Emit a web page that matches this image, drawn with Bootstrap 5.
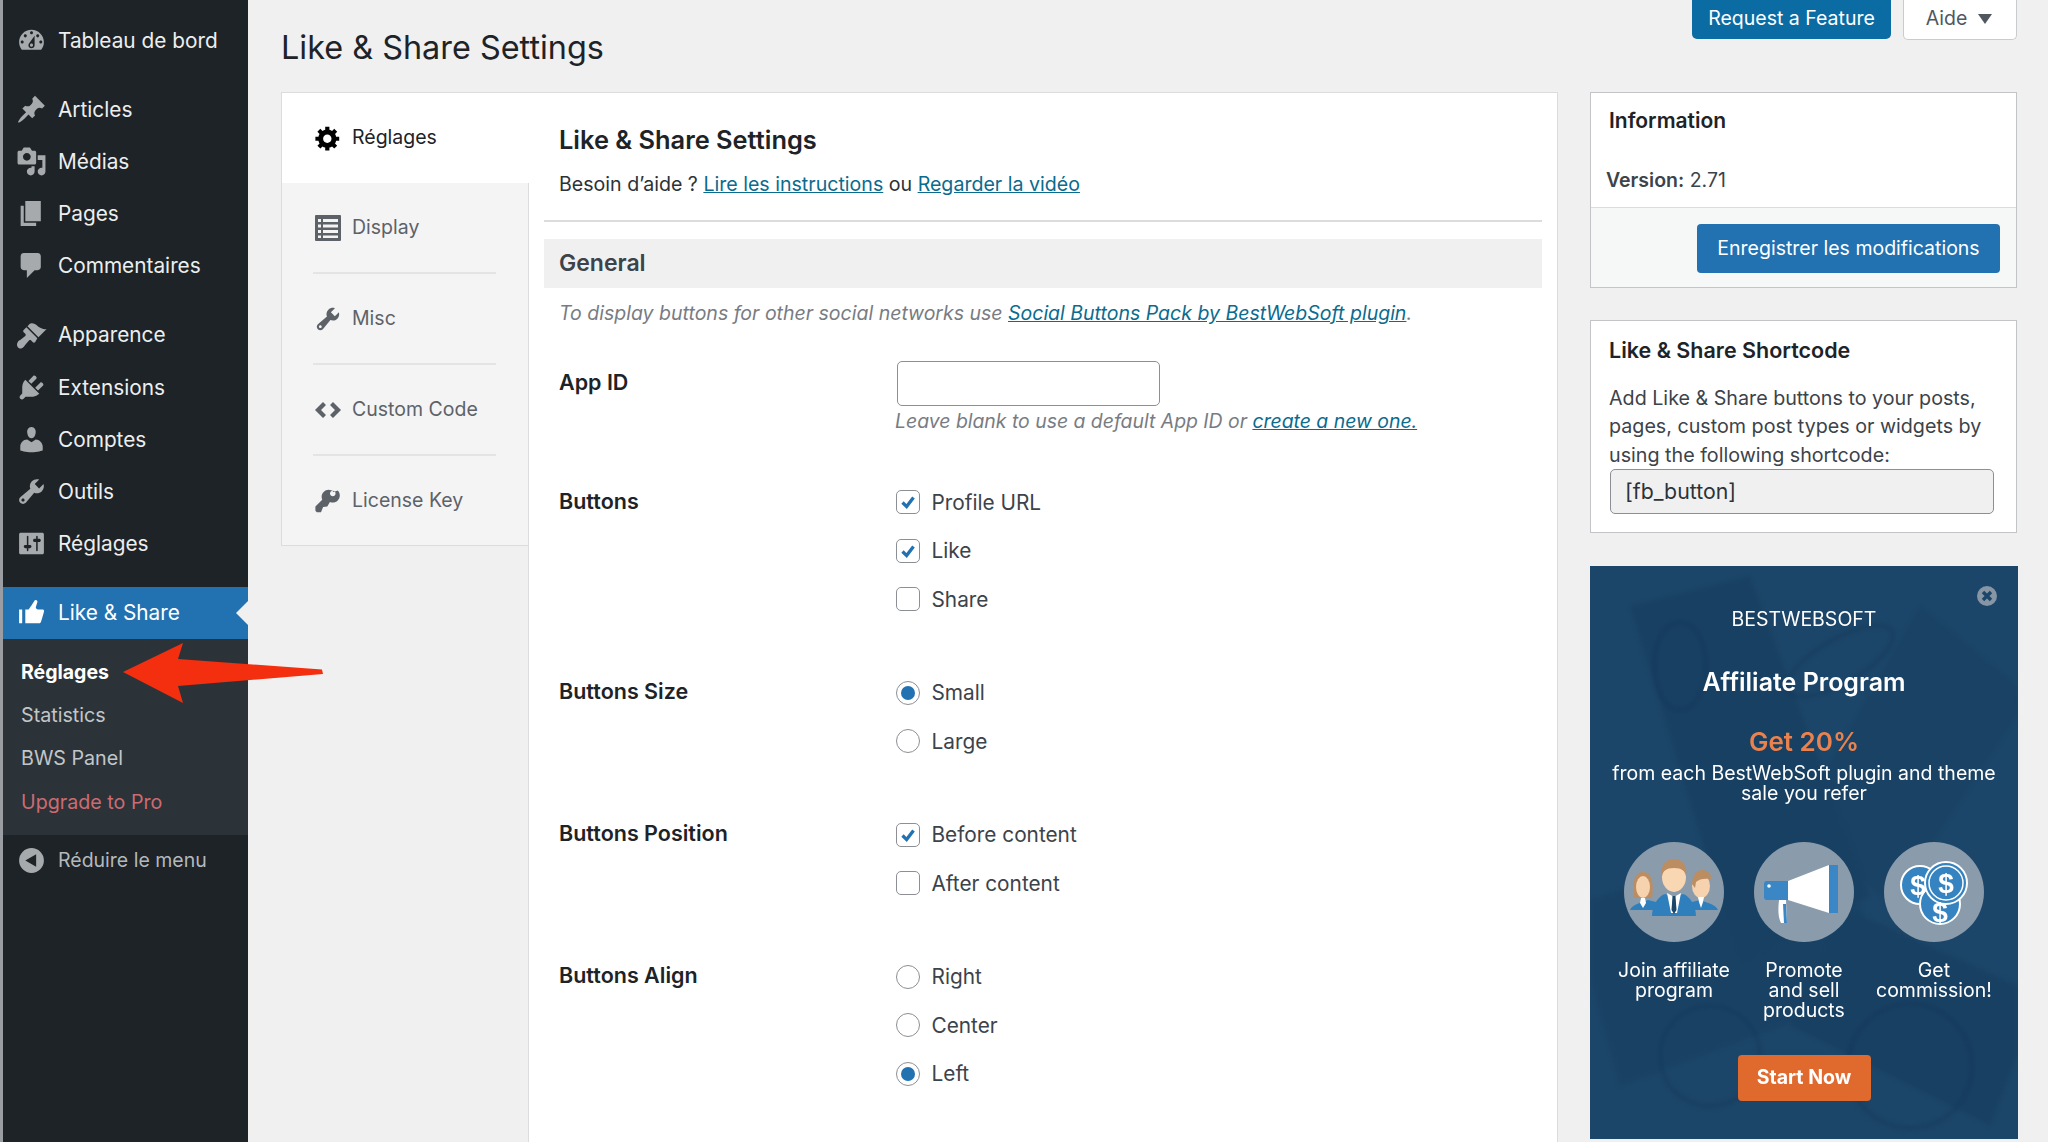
<!DOCTYPE html>
<html lang="fr">
<head>
<meta charset="utf-8">
<title>Like &amp; Share Settings</title>
<link href="https://cdn.jsdelivr.net/npm/bootstrap@5.3.0/dist/css/bootstrap.min.css" rel="stylesheet">
<style>
html,body{height:1142px;overflow:hidden}
body{background:#f0f0f1;font-family:Inter,"Liberation Sans",sans-serif;font-size:19.5px;color:#3c434a;line-height:1.4}
.wp-shell{height:1142px;position:relative;overflow:hidden}
.edge-strip{width:3px;background:#9a9da1;flex:none}
.wp-side{width:245px;flex:none;background:#1d2327;padding-top:14px;color:#e4e6e8}
.side-item{height:52.2px;padding-left:13px;gap:11px;color:#eceef0;position:relative;font-size:20.8px}
.side-item svg{width:31px;height:31px;fill:#a7aaad;flex:none}
.side-gap{margin-bottom:17px}
.side-active{background:#2271b1;color:#fff;height:52px}
.side-active svg{fill:#fff}
.side-active::after{content:"";position:absolute;right:0;top:14px;border:12px solid transparent;border-right-color:#f0f0f1;border-left-width:0}
.side-sub{background:#2c3338;padding:12px 0 0 18px;height:196px}
.side-sub div{height:43.3px;color:#c3c6c9;display:flex;align-items:center;font-size:19.7px}
.side-sub .sub-now{color:#fff;font-weight:700;font-size:19.5px}
.side-sub .sub-pro{color:#cc6b72}
.side-fold{color:#b4b8bc;font-size:19.5px}
.wp-main{flex:1;padding:0 31px 0 33px;min-width:0}
.head-zone{height:92px}
.page-title{font-size:32.4px;font-weight:400;color:#1d2327;margin:0;padding-top:25px;line-height:46px}
.top-btn{height:39px;border-radius:0 0 5px 5px;display:flex;align-items:center;justify-content:center;padding:0 0 2px;font-size:19.5px;border:0}
.top-req{width:199px;background:#0b6ca3;color:#fff}
.top-aide{width:114px;height:40px;background:#fff;color:#50575e;border:1px solid #c9cbce;border-top:0;gap:11px;padding-right:2px}
.tri-down{width:0;height:0;border:7px solid transparent;border-top:10px solid #50575e;border-bottom:0}
.set-card{width:1277px;flex:none;margin-right:32px}
.tab-col{width:247px;flex:none;align-self:flex-start;border:1px solid #dcdcde;border-right:0;background:#f4f4f5}
.tab-row{color:#5c6268;padding-left:32px}
.tab-row svg{width:28px;height:28px;fill:#5c6268;flex:none;margin-right:10px}
.tab-on{background:#fff;color:#1d2327;height:90px;margin-right:-1px;position:relative}
.tab-on svg{fill:#000}
.tab-in{height:91px;border-bottom:2px solid #e4e4e6;margin-right:32px;margin-left:31px;padding-left:1px}
.tab-last{height:89px;border-bottom:0}
.body-col{flex:1;background:#fff;border:1px solid #dcdcde;border-bottom:0;height:1100px;padding:0 15px 0 15px;border-left-color:#dcdcde}
.set-h{font-size:25.4px;font-weight:600;color:#1d2327;margin:0;padding:29px 0 0 15px;line-height:36px}
.help-line{padding:11px 0 0 15px;margin:0;line-height:30px;color:#2c3338;font-size:19.6px}
.help-line a,.muted-line a{color:#0a6b8f}
.sep-line{height:2px;background:#dcdcde;margin:21px 0 17px}
.band-head{background:#f0f0f1;height:49px;display:flex;align-items:center;padding-left:15px;font-size:23px;font-weight:600;color:#3c434a}
.muted-line{font-style:italic;color:#787c82;margin:0;font-size:19.4px}
.note-line{padding:12px 0 0 15px;line-height:27px;height:73px;font-size:19.5px}
.form-line{padding-left:15px}
.form-key{width:337px;flex:none;font-weight:600;color:#1d2327;font-size:21.5px}
.id-key{padding-top:6px}
.id-input{width:263px;height:45px;border:1.5px solid #8c8f94;border-radius:5px;background:#fff;display:block;padding:0;margin-left:1px}
.hint-line{line-height:26px;margin-top:2px;margin-left:-1px}
.group-space{margin-bottom:45px}
.group-first{margin-bottom:44px}
.opt-row{height:48.5px;display:flex;align-items:center;margin:0;padding:0;color:#3c434a;font-size:20.8px}
.opt-row .form-check-input{width:24px;height:24px;margin:0 12px 0 -.5px;float:none;border:1.5px solid #8c8f94;background-color:#fff;box-shadow:none;flex:none}
.opt-row .form-check-input[type=checkbox]{border-radius:5px}
.opt-row .form-check-input:checked[type=checkbox]{background-color:#fff;border-color:#8c8f94;background-size:22px;background-image:url("data:image/svg+xml,%3Csvg xmlns='http://www.w3.org/2000/svg' viewBox='0 0 24 24'%3E%3Cpath d='M6 12.500l4.500 4.500L18 7' fill='none' stroke='%232271b1' stroke-width='3.600'/%3E%3C/svg%3E")}
.opt-row .form-check-input:checked[type=radio]{background-color:#fff;border-color:#8c8f94;background-size:14px;background-image:url("data:image/svg+xml,%3Csvg xmlns='http://www.w3.org/2000/svg' viewBox='0 0 10 10'%3E%3Ccircle cx='5' cy='5' r='5' fill='%232271b1'/%3E%3C/svg%3E")}
.key-first{padding-top:7.5px}
.aside-col{width:427px;flex:none}
.info-box{background:#fff;border:1.5px solid #c3c4c7;border-radius:0;margin-bottom:32px}
.box-head{font-weight:600;color:#1d2327;font-size:21px}
.info-head{padding:14px 0 0 18px;line-height:28px}
.info-ver{padding:31px 0 0 15px;line-height:28px;height:72px;color:#3c434a}
.info-foot{background:#f6f7f7;border-top:1px solid #dcdcde;height:80px;padding:2px 16px 0 0}
.save-btn{width:303px;height:49px;background:#2271b1;border:0;color:#fff;font-size:19.5px;border-radius:4px;padding:0}
.code-box{height:213px;padding:0 17px 0 18px;margin-bottom:33px}
.code-head{padding-top:15px;line-height:28px;font-size:21.5px}
.code-text{margin:20px 0 0;line-height:28.3px;color:#3c434a;font-size:19.7px}
.code-input{width:384px;height:45px;background:#f0f0f1;border:1.5px solid #8c8f94;border-radius:5px;padding:0 14px;font-size:21.3px;color:#2c3338;display:block;margin:0 0 0 1px}
.promo{height:573px;width:428px;background:#1c4669;color:#fff;position:relative;overflow:hidden;text-align:center;line-height:20px}
.promo-tex{position:absolute;left:0;top:0;width:428px;height:573px;filter:blur(2px)}
.promo-in{position:relative}
.promo-x{position:absolute;right:21px;top:20px;width:20px;height:20px}
.promo-brand{padding-top:43px;height:100px;line-height:20px;font-size:19.5px}
.promo-title{font-size:25px;font-weight:600;line-height:32px;height:60px}
.promo-get{font-size:26px;font-weight:600;color:#e9824e;line-height:32px;height:36px}
.promo-from{height:80px;padding-top:1px}
.promo-cols{margin:0 19px}
.promo-cols>div{padding:0}
.promo-cols svg{width:100px;height:100px;display:block;margin:0 auto 18px}
.promo-cta{width:133px;height:46px;background:#e0692d;border:0;border-radius:4px;color:#fff;font-weight:700;font-size:19.5px;padding:0;margin-top:0}
.promo-lbl{height:95px}
.red-arrow{position:absolute;left:0;top:620px;width:340px;height:100px}
</style>
</head>
<body>
<div class="wp-shell d-flex">
  <div class="edge-strip"></div>
  <nav class="wp-side">
    <div class="side-item side-gap d-flex align-items-center"><svg viewBox="0 0 20 20"><path d="M3.76 16h12.48c1.1-1.37 1.76-3.11 1.76-5 0-4.42-3.58-8-8-8s-8 3.58-8 8c0 1.89.66 3.63 1.76 5zM10 4c.55 0 1 .45 1 1s-.45 1-1 1-1-.45-1-1 .45-1 1-1zM6 6c.55 0 1 .45 1 1s-.45 1-1 1-1-.45-1-1 .45-1 1-1zm8 0c.55 0 1 .45 1 1s-.45 1-1 1-1-.45-1-1 .45-1 1-1zm-5.37 5.55L12 7v6c0 1.1-.9 2-2 2s-2-.9-2-2c0-.57.24-1.08.63-1.45zM4 10c.55 0 1 .45 1 1s-.45 1-1 1-1-.45-1-1 .45-1 1-1zm12 0c.55 0 1 .45 1 1s-.45 1-1 1-1-.45-1-1 .45-1 1-1zm-5 3c0-.55-.45-1-1-1s-1 .45-1 1 .45 1 1 1 1-.45 1-1z" fill-rule="evenodd"/></svg><span>Tableau de bord</span></div>
    <div class="side-item d-flex align-items-center"><svg viewBox="0 0 20 20"><path d="M10.44 3.02l1.82-1.82 6.36 6.35-1.83 1.82c-1.05-.68-2.48-.57-3.41.36l-.75.75c-.92.93-1.04 2.35-.35 3.41l-1.83 1.82-2.41-2.41-2.8 2.79c-.42.42-3.38 2.71-3.8 2.29s1.86-3.39 2.28-3.81l2.79-2.79L4.1 9.36l1.83-1.82c1.05.69 2.48.57 3.4-.36l.75-.75c.93-.92 1.05-2.35.36-3.41z"/></svg><span>Articles</span></div>
    <div class="side-item d-flex align-items-center"><svg viewBox="0 0 20 20"><path d="M13 11V4c0-.55-.45-1-1-1h-1.67L9 1H5L3.67 3H2c-.55 0-1 .45-1 1v7c0 .55.45 1 1 1h10c.55 0 1-.45 1-1zM7 4.5c1.38 0 2.5 1.12 2.5 2.5S8.38 9.5 7 9.5 4.5 8.38 4.5 7 5.62 4.5 7 4.5zM14 6h5v10.5c0 1.38-1.12 2.5-2.5 2.5S14 17.88 14 16.5s1.12-2.5 2.5-2.5c.17 0 .34.02.5.05V9h-3V6zm-4 8.05V13h2v3.5c0 1.38-1.12 2.5-2.5 2.5S7 17.88 7 16.5 8.12 14 9.5 14c.17 0 .34.02.5.05z" fill-rule="evenodd"/></svg><span>Médias</span></div>
    <div class="side-item d-flex align-items-center"><svg viewBox="0 0 20 20"><path d="M6 15V2h10v13H6zm-1 1h8v2H3V5h2v11z"/></svg><span>Pages</span></div>
    <div class="side-item side-gap d-flex align-items-center"><svg viewBox="0 0 20 20"><path d="M5 2h9c1.1 0 2 .9 2 2v7c0 1.1-.9 2-2 2h-2l-5 5v-5H5c-1.1 0-2-.9-2-2V4c0-1.1.9-2 2-2z"/></svg><span>Commentaires</span></div>
    <div class="side-item d-flex align-items-center"><svg viewBox="0 0 20 20"><path d="M14.48 11.06L7.41 3.99l1.5-1.5c.5-.56 2.3-.47 3.51.32 1.21.8 1.43 1.28 2.91 2.1 1.18.64 2.45 1.26 4.45.85zm-.71.71L6.7 4.7 4.93 6.47c-.39.39-.39 1.02 0 1.41l1.06 1.06c.39.39.39 1.03 0 1.42-.6.6-1.43 1.11-2.21 1.69-.35.26-.7.53-1.01.84C1.43 13.23 0 15.3 1 17.3c.5 1 1.6 1.4 2.7 1 .9-.3 1.8-1.7 2.6-2.7.8-.9 1.4-1.7 2.1-2.4.4-.4 1-.4 1.4 0l1.1 1.1c.4.4 1 .4 1.4 0z"/></svg><span>Apparence</span></div>
    <div class="side-item d-flex align-items-center"><svg viewBox="0 0 20 20"><path d="M13.11 4.36L9.87 7.6 8 5.73l3.24-3.24c.35-.34 1.05-.2 1.56.32.52.51.66 1.21.31 1.55zm-8 1.77l.91-1.12 9.01 9.01-1.19.84c-.71.71-2.63 1.16-3.82 1.16H6.14L4.9 17.26c-.59.59-1.54.59-2.12 0-.59-.58-.59-1.53 0-2.12l1.24-1.24v-3.88c0-1.13.4-3.19 1.09-3.89zm7.26 3.97l3.24-3.24c.34-.35 1.04-.21 1.55.31.52.51.66 1.21.31 1.55l-3.24 3.25z"/></svg><span>Extensions</span></div>
    <div class="side-item d-flex align-items-center"><svg viewBox="0 0 20 20"><path d="M10 9.25c-2.27 0-2.73-3.44-2.73-3.44C7 4.02 7.82 2 9.97 2c2.16 0 2.98 2.02 2.71 3.81 0 0-.41 3.44-2.68 3.44zm0 2.57L12.72 10c2.39 0 4.52 2.33 4.52 4.53v2.49s-3.65 1.13-7.24 1.13c-3.65 0-7.24-1.13-7.24-1.13v-2.49c0-2.25 1.94-4.48 4.47-4.48z"/></svg><span>Comptes</span></div>
    <div class="side-item d-flex align-items-center"><svg viewBox="0 0 20 20"><path d="M16.68 9.77c-1.34 1.34-3.3 1.67-4.95.99l-5.41 6.52c-.99.99-2.59.99-3.58 0s-.99-2.59 0-3.57l6.52-5.42c-.68-1.65-.35-3.61.99-4.95 1.28-1.28 3.12-1.62 4.72-1.06l-2.89 2.89 2.82 2.82 2.86-2.87c.53 1.58.18 3.39-1.08 4.67zM3.81 16.21c.4.39 1.04.39 1.43 0 .4-.4.4-1.04 0-1.43-.39-.4-1.03-.4-1.43 0-.39.39-.39 1.03 0 1.43z"/></svg><span>Outils</span></div>
    <div class="side-item side-gap d-flex align-items-center"><svg viewBox="0 0 20 20"><path d="M18 16V4c0-.55-.45-1-1-1H3c-.55 0-1 .45-1 1v12c0 .55.45 1 1 1h14c.55 0 1-.45 1-1zM8 11h1c.55 0 1 .45 1 1s-.45 1-1 1H8v1.5c0 .28-.22.5-.5.5s-.5-.22-.5-.5V13H6c-.55 0-1-.45-1-1s.45-1 1-1h1V5.5c0-.28.22-.5.5-.5s.5.22.5.5V11zm5-2h-1c-.55 0-1-.45-1-1s.45-1 1-1h1V5.5c0-.28.22-.5.5-.5s.5.22.5.5V7h1c.55 0 1 .45 1 1s-.45 1-1 1h-1v5.5c0 .28-.22.5-.5.5s-.5-.22-.5-.5V9z" fill-rule="evenodd"/></svg><span>Réglages</span></div>
    <div class="side-item side-active d-flex align-items-center"><svg viewBox="0 0 20 20"><path d="M12.72 2c.15-.02.26.02.41.07.56.19.83.79.66 1.35-.17.55-1 3.04-1 3.58 0 .53.75 1 1.35 1h3c.6 0 1 .4 1 1s-2 7-2 7c-.17.39-.55 1-1 1H6V8h2.14c.41-.41 3.3-4.71 3.58-5.27.21-.41.6-.68 1-.73zM2 8h2v9H2V8z"/></svg><span>Like &amp; Share</span></div>
    <div class="side-sub">
      <div class="sub-now">Réglages</div>
      <div>Statistics</div>
      <div>BWS Panel</div>
      <div class="sub-pro">Upgrade to Pro</div>
    </div>
    <div class="side-item side-fold d-flex align-items-center"><svg viewBox="0 0 20 20"><path fill-rule="evenodd" d="M10 2a8 8 0 1 1 0 16 8 8 0 0 1 0-16zm3 4l-7 4 7 4z"/></svg><span>Réduire le menu</span></div>
  </nav>

  <main class="wp-main">
    <div class="head-zone d-flex justify-content-between align-items-start">
      <h1 class="page-title">Like &amp; Share Settings</h1>
      <div class="d-flex gap-2 align-items-start">
        <button type="button" class="btn top-btn top-req me-1">Request a Feature</button>
        <button type="button" class="btn top-btn top-aide">Aide <span class="tri-down"></span></button>
      </div>
    </div>
    <div class="d-flex">
      <section class="set-card d-flex">
        <div class="tab-col">
          <div class="tab-row tab-on d-flex align-items-center"><svg viewBox="0 0 20 20"><path d="M18 12h-2.18c-.17.7-.44 1.35-.81 1.93l1.54 1.54-2.1 2.1-1.54-1.54c-.58.36-1.23.63-1.91.79V19H8v-2.18c-.68-.16-1.33-.43-1.91-.79l-1.54 1.54-2.12-2.12 1.54-1.54c-.36-.58-.63-1.23-.79-1.91H1V9.03h2.17c.16-.7.44-1.35.8-1.94L2.43 5.55l2.1-2.1 1.54 1.54c.58-.37 1.24-.64 1.93-.81V2h3v2.18c.68.16 1.33.43 1.91.79l1.54-1.54 2.12 2.12-1.54 1.54c.36.59.64 1.24.8 1.94H18V12zm-8.5 1.5c1.66 0 3-1.34 3-3s-1.34-3-3-3-3 1.34-3 3 1.34 3 3 3z" fill-rule="evenodd"/></svg><span>Réglages</span></div>
          <div class="tab-row tab-in d-flex align-items-center"><svg viewBox="0 0 28 28"><path fill-rule="evenodd" d="M2 1h24a1 1 0 0 1 1 1v24a1 1 0 0 1-1 1H2a1 1 0 0 1-1-1V2a1 1 0 0 1 1-1zM4 5v3h3V5zm5 0v3h15V5zM4 10.500v3h3v-3zm5 0v3h15v-3zM4 16v3h3v-3zm5 0v3h15v-3zM4 21.500v2.500h3v-2.500zm5 0v2.500h15v-2.500z"/></svg><span>Display</span></div>
          <div class="tab-row tab-in d-flex align-items-center"><svg viewBox="0 0 20 20"><path d="M16.68 9.77c-1.34 1.34-3.3 1.67-4.95.99l-5.41 6.52c-.99.99-2.59.99-3.58 0s-.99-2.59 0-3.57l6.52-5.42c-.68-1.65-.35-3.61.99-4.95 1.28-1.28 3.12-1.62 4.72-1.06l-2.89 2.89 2.82 2.82 2.86-2.87c.53 1.58.18 3.39-1.08 4.67zM3.81 16.21c.4.39 1.04.39 1.43 0 .4-.4.4-1.04 0-1.43-.39-.4-1.03-.4-1.43 0-.39.39-.39 1.03 0 1.43z" fill-rule="evenodd"/></svg><span>Misc</span></div>
          <div class="tab-row tab-in d-flex align-items-center"><svg viewBox="0 0 28 28"><path d="M9 6l3 3-5 5 5 5-3 3-8-8zM19 6l-3 3 5 5-5 5 3 3 8-8z"/></svg><span>Custom Code</span></div>
          <div class="tab-row tab-in tab-last d-flex align-items-center"><svg viewBox="0 0 20 20"><path fill-rule="evenodd" d="M16.95 2.58c1.96 1.95 1.96 5.12 0 7.07-1.51 1.51-3.75 1.84-5.59 1.01l-1.87 3.31-2.99.31L5 18H2l-1-1v-3l4.89-4.89c-.83-1.84-.5-4.08 1.01-5.59 1.95-1.96 5.12-1.96 7.07 0zm-2.12 3.53c.78-.78.78-2.05 0-2.83-.78-.78-2.05-.78-2.83 0-.78.78-.78 2.05 0 2.83.78.78 2.05.78 2.83 0z"/></svg><span>License Key</span></div>
        </div>
        <div class="body-col">
          <h2 class="set-h">Like &amp; Share Settings</h2>
          <p class="help-line">Besoin d’aide ? <a href="#">Lire les instructions</a> ou <a href="#">Regarder la vidéo</a></p>
          <div class="sep-line"></div>
          <div class="band-head">General</div>
          <p class="muted-line note-line">To display buttons for other social networks use <a href="#">Social Buttons Pack by BestWebSoft plugin</a>.</p>

          <div class="form-line d-flex group-first">
            <div class="form-key id-key">App ID</div>
            <div>
              <input type="text" class="id-input" aria-label="App ID">
              <p class="muted-line hint-line">Leave blank to use a default App ID or <a href="#">create a new one.</a></p>
            </div>
          </div>

          <div class="form-line d-flex group-space">
            <div class="form-key key-first">Buttons</div>
            <div>
              <label class="opt-row"><input class="form-check-input" type="checkbox" checked>Profile URL</label>
              <label class="opt-row"><input class="form-check-input" type="checkbox" checked>Like</label>
              <label class="opt-row"><input class="form-check-input" type="checkbox">Share</label>
            </div>
          </div>
          <div class="form-line d-flex group-space">
            <div class="form-key key-first">Buttons Size</div>
            <div>
              <label class="opt-row"><input class="form-check-input" type="radio" name="rs" checked>Small</label>
              <label class="opt-row"><input class="form-check-input" type="radio" name="rs">Large</label>
            </div>
          </div>
          <div class="form-line d-flex group-space">
            <div class="form-key key-first">Buttons Position</div>
            <div>
              <label class="opt-row"><input class="form-check-input" type="checkbox" checked>Before content</label>
              <label class="opt-row"><input class="form-check-input" type="checkbox">After content</label>
            </div>
          </div>
          <div class="form-line d-flex group-space">
            <div class="form-key key-first">Buttons Align</div>
            <div>
              <label class="opt-row"><input class="form-check-input" type="radio" name="ra">Right</label>
              <label class="opt-row"><input class="form-check-input" type="radio" name="ra">Center</label>
              <label class="opt-row"><input class="form-check-input" type="radio" name="ra" checked>Left</label>
            </div>
          </div>
        </div>
      </section>

      <aside class="aside-col">
        <div class="info-box">
          <div class="box-head info-head">Information</div>
          <div class="info-ver"><strong class="fw-semibold">Version:</strong> 2.71</div>
          <div class="info-foot d-flex justify-content-end align-items-center"><button type="button" class="btn save-btn">Enregistrer les modifications</button></div>
        </div>
        <div class="info-box code-box">
          <div class="box-head code-head">Like &amp; Share Shortcode</div>
          <p class="code-text">Add Like &amp; Share buttons to your posts, pages, custom post types or widgets by using the following shortcode:</p>
          <input type="text" class="code-input" value="[fb_button]" aria-label="Shortcode">
        </div>
        <div class="promo">
          <svg class="promo-tex" viewBox="0 0 428 573" aria-hidden="true">
            <g fill="#143a5c" opacity=".45">
              <path d="M40 40L160 10 280 330 150 400z"/>
              <path d="M330 40L440 130 300 340 210 250z" opacity=".6"/>
              <path d="M-20 340L240 260 300 420 30 520z" opacity=".7"/>
              <path d="M250 340L450 430 400 560 200 460z"/>
            </g>
            <g fill="none" stroke="#143a5c" stroke-width="4" opacity=".55">
              <ellipse cx="90" cy="100" rx="26" ry="44"/>
              <ellipse cx="250" cy="95" rx="60" ry="22" transform="rotate(-30 250 95)"/>
              <circle cx="320" cy="500" r="62"/>
              <circle cx="120" cy="490" r="50"/>
            </g>
          </svg>
          <div class="promo-in">
            <svg class="promo-x" viewBox="0 0 20 20" aria-hidden="true"><circle cx="10" cy="10" r="10" fill="#8795a4"/><path d="M6 6l8 8M14 6l-8 8" stroke="#1c4669" stroke-width="3.400"/></svg>
            <div class="promo-brand">BESTWEBSOFT</div>
            <div class="promo-title">Affiliate Program</div>
            <div class="promo-get">Get 20%</div>
            <div class="promo-from">from each BestWebSoft plugin and theme<br>sale you refer</div>
            <div class="row promo-cols g-0">
              <div class="col-4">
                <svg viewBox="0 0 100 100" aria-hidden="true"><circle cx="50" cy="50" r="50" fill="#8a9bab"/>
                  <path d="M6 68c2-6 14-8 18-10l8 2v8H6z" fill="#2f7fbd"/><path d="M94 68c-2-6-14-8-18-10l-8 2v8h26z" fill="#2f7fbd"/>
                  <path d="M10 56c-2-14 0-26 9-26s11 12 9 26z" fill="#bd8d62"/><ellipse cx="19" cy="45" rx="7" ry="11" fill="#f6d2ae"/>
                  <path d="M17 56h4l1 5-3 5-3-5z" fill="#fff"/>
                  <ellipse cx="77" cy="44" rx="9" ry="12" fill="#f6d2ae"/><path d="M68 42c0-10 6-14 10-14s10 3 9 9c-7-1-12 0-15 3l-1 6z" fill="#bd8d62"/>
                  <path d="M74 55h6l-1 5-2 6-2-6z" fill="#fff"/>
                  <path d="M28 74c0-10 6-20 13-22l9 3 9-3c7 2 13 12 13 22z" fill="#2f7fbd"/>
                  <path d="M43 51l7 4 7-4-4 20h-6z" fill="#fff"/><path d="M48.500 54h3l1 14-2.500 4-2.500-4z" fill="#1c4669"/>
                  <ellipse cx="50" cy="35" rx="12" ry="15" fill="#fad7b3"/><path d="M38 34c-2-12 5-17 12-17s14 5 12 17c-1-5-4-8-12-8s-11 3-12 8z" fill="#bd8d62"/>
                </svg>
                <div class="promo-lbl">Join affiliate<br>program</div>
              </div>
              <div class="col-4">
                <svg viewBox="0 0 100 100" aria-hidden="true"><circle cx="50" cy="50" r="50" fill="#8a9bab"/>
                  <path d="M34 39L75 23v48L34 58z" fill="#fff"/><rect x="75" y="23" width="9" height="48" fill="#3b86c4"/>
                  <path d="M13 39h21v19H13a3 3 0 0 1-3-3V42a3 3 0 0 1 3-3z" fill="#3b86c4"/><circle cx="15" cy="44" r="1.800" fill="#fff"/>
                  <path d="M25 58h7l1 23h-6c-3-6-3-13-2-23z" fill="#fff"/><path d="M29 62h3l1 19h-3z" fill="#3b86c4"/>
                </svg>
                <div class="promo-lbl">Promote<br>and sell<br>products</div>
              </div>
              <div class="col-4">
                <svg viewBox="0 0 100 100" aria-hidden="true"><circle cx="50" cy="50" r="50" fill="#8a9bab"/>
                  <g stroke="#fff" stroke-width="2" fill="#3583c0">
                    <circle cx="36" cy="43" r="19"/><circle cx="56" cy="62" r="20"/><circle cx="62" cy="41" r="21"/><circle cx="62" cy="41" r="17" fill="none" stroke-width="1.500"/>
                  </g>
                  <g fill="#fff" font-family="Liberation Sans,sans-serif" font-weight="700" text-anchor="middle" font-size="28">
                    <text x="34" y="53">$</text><text x="56" y="80">$</text><text x="62" y="51">$</text>
                  </g>
                </svg>
                <div class="promo-lbl">Get<br>commission!</div>
              </div>
            </div>
            <button type="button" class="btn promo-cta">Start Now</button>
          </div>
        </div>
      </aside>
    </div>
  </main>
  <svg class="red-arrow" viewBox="0 0 340 100" aria-hidden="true"><path d="M123 52L183 23 178 39 322 49.500 323 54 178 66 183 83z" fill="#f32f10"/></svg>
</div>
<script src="https://cdn.jsdelivr.net/npm/bootstrap@5.3.0/dist/js/bootstrap.bundle.min.js"></script>
</body>
</html>
